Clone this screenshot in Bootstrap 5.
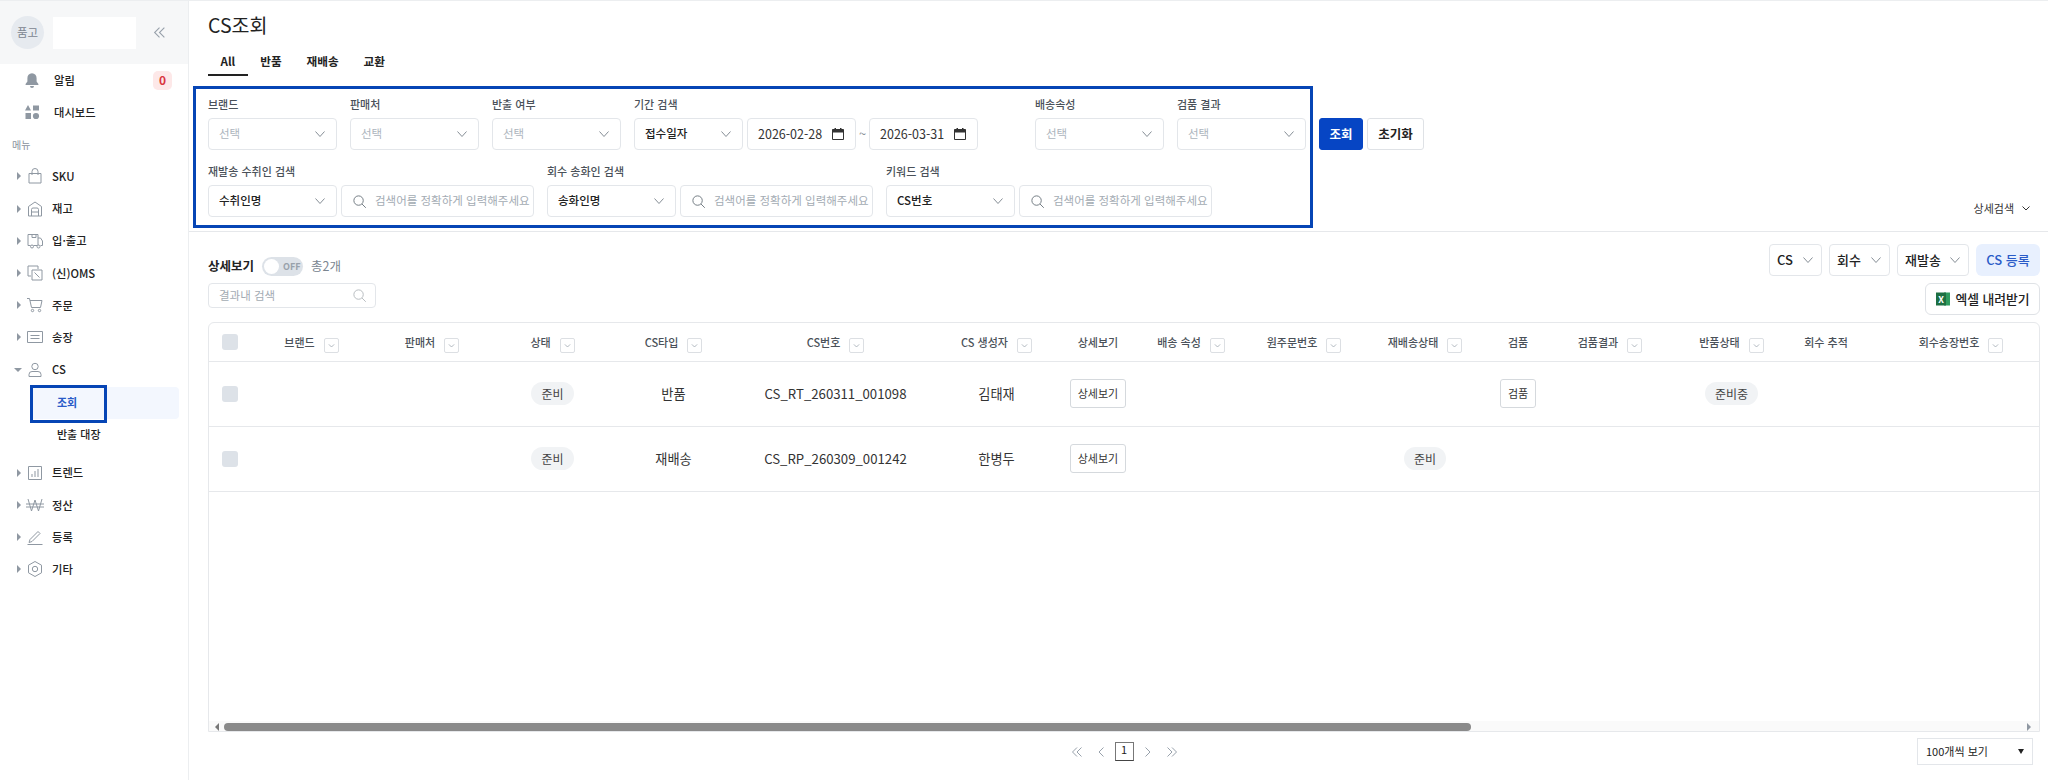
<!DOCTYPE html>
<html lang="ko">
<head>
  <meta charset="UTF-8">
  <title>CS조회</title>
  <link rel="stylesheet" href="https://cdn.jsdelivr.net/npm/bootstrap@5.3.0/dist/css/bootstrap.min.css">
  <style>
    body {
      font-family: "Noto Sans CJK KR", "Noto Sans", sans-serif;
      height: 100vh;
      overflow: hidden;
      color: #222;
      font-size: 13px;
      border-top: 1px solid #eceef0;
    }

    /* sidebar */
    .side {
      width: 189px;
      flex: none;
      border-right: 1px solid #eceef0;
    }
    .side-top {
      height: 63px;
      background: #f6f7f8;
      padding-left: 11px;
    }
    .side-avatar {
      width: 33px;
      height: 33px;
      background: #e6eaef;
      color: #7b8590;
      font-size: 11.5px;
    }
    .side-blank {
      width: 83px;
      height: 32px;
      margin-left: 9px;
      background: #fff;
    }
    .side-fold { margin-left: 17px; color: #98a1ab; }
    .side-item {
      height: 32.2px;
      font-weight: 500;
      color: #222;
      font-size: 11.3px;
      text-decoration: none;
    }
    .side-top-item { padding-left: 23px; }
    .side-top-item .nm { margin-left: 13px; }
    .side-badge {
      width: 19px;
      height: 19px;
      margin-left: auto;
      margin-right: 16px;
      background: #fde8e8;
      color: #d9363e;
      border-radius: 5px;
      font-size: 12px;
      font-weight: 700;
    }
    .side-cap {
      color: #8a939d;
      font-size: 10px;
      height: 32px;
      padding-left: 12px;
    }
    .side-tree { padding-left: 17px; }
    .side-tree .nm { margin-left: 8px; }
    .caret-r {
      width: 0; height: 0;
      border-left: 4px solid #8f98a2;
      border-top: 4px solid transparent;
      border-bottom: 4px solid transparent;
      margin-right: 5px;
    }
    .caret-d {
      width: 0; height: 0;
      border-top: 4px solid #8f98a2;
      border-left: 4px solid transparent;
      border-right: 4px solid transparent;
      margin-left: -3px;
      margin-right: 4px;
    }
    .caret-l {
      width: 0; height: 0;
      border-right: 4px solid #777;
      border-top: 4px solid transparent;
      border-bottom: 4px solid transparent;
    }
    .side-ico { width: 18px; height: 18px; flex: none; color: #8f98a2; }
    .side-sub-wrap { margin-top: 1px; }
    .side-sub {
      height: 32px;
      margin-left: 30px;
      margin-right: 9px;
      padding-left: 27px;
      border-radius: 4px;
      font-weight: 500;
      font-size: 11px;
      color: #222;
      text-decoration: none;
    }
    .side-sub.on { background: #f3f7fe; color: #2a5bc8; font-weight: 700; }
    .side-sub-gap { height: 6px; }
    .side-mark {
      position: absolute;
      left: 30px;
      top: -2px;
      width: 77px;
      height: 38px;
      border: 3px solid #0645b5;
    }

    /* top area */
    .page-main { min-width: 0; }
    .page-title {
      font-size: 19.5px;
      font-weight: 400;
      margin: 9px 0 0 19px;
      line-height: 29px;
    }
    .tab-row { margin: 9px 0 0 19px; }
    .tab-row .nav-link {
      color: #222;
      font-weight: 700;
      font-size: 11.6px;
      padding: 0 12.5px;
      height: 28px;
      line-height: 26px;
      border-bottom: 2px solid transparent;
    }
    .tab-row .nav-link.active { border-bottom-color: #222; }
    .filter-zone {
      border-bottom: 1px solid #e6e8eb;
      padding: 10px 8px 3px 4px;
    }
    .filter-panel {
      width: 1120px;
      height: 142px;
      border: 3px solid #0645b5;
      padding: 6px 0 0 12px;
    }
    .flt-row { display: flex; gap: 13px; }
    .flt-row + .flt-row { margin-top: 12px; }
    .flt-label {
      font-size: 11px;
      line-height: 18px;
      margin-bottom: 5px;
      color: #4a5159;
      font-weight: 500;
      white-space: nowrap;
    }
    .flt-sel, .top-sel {
      height: 32px;
      font-size: 11.5px;
      font-weight: 500;
      color: #222;
      border: 1px solid #e3e6ea;
      border-radius: 4px;
      padding: 0 24px 0 10px;
      background-position: right 10px center;
      background-size: 12px 10px;
      background-image: url("data:image/svg+xml,%3csvg xmlns='http://www.w3.org/2000/svg' viewBox='0 0 12 8'%3e%3cpath fill='none' stroke='%23868e96' d='M1.5 1.5 6 6.5l4.5-5'/%3e%3c/svg%3e");
    }
    .flt-sel { width: 129px; }
    .flt-sel.empty { color: #adb5bd; font-weight: 400; }
    .flt-date { width: 109px; }
    .flt-tilde { width: 13px; text-align: center; color: #868e96; }
    .flt-far { margin-left: 44px; }
    .flt-box {
      height: 32px;
      border: 1px solid #e3e6ea;
      border-radius: 4px;
      padding: 0 10px;
      font-size: 12.5px;
      color: #333;
      background: #fff;
    }
    .flt-search { width: 193px; padding-right: 1px; }
    .flt-box input {
      border: 0;
      outline: 0;
      width: 100%;
      min-width: 0;
      padding: 0;
      font-size: 11.5px;
      color: #333;
      background: transparent;
    }
    .flt-box input::placeholder { color: #a3abb3; }
    .filter-btns { margin: 32px 0 0 6px; }
    .btn-find, .btn-reset {
      height: 32px;
      font-size: 12.5px;
      font-weight: 700;
      padding: 0;
      border-radius: 3px;
    }
    .btn-find { width: 44px; background: #0645c4; border-color: #0645c4; color: #fff; }
    .btn-reset { width: 57px; background: #fff; border-color: #dfe2e6; color: #222; }
    .more-toggle { margin: 0 8px 12px 0; gap: 6px; font-size: 11px; color: #333; white-space: nowrap; }

    /* tool row */
    .tool-row { padding: 12px 8px 7px 19px; }
    .tool-detail { font-size: 12.5px; font-weight: 700; height: 19px; margin-top: 13px; }
    .tool-total { color: #7b8590; font-size: 12.5px; font-weight: 400; }
    .sw-off {
      width: 41px;
      height: 19px;
      background: #dde2e8;
      border-radius: 10px;
      padding: 2px;
      font-size: 9px;
      font-weight: 700;
      color: #98a1ab;
    }
    .sw-knob { width: 15px; height: 15px; background: #fff; border-radius: 50%; margin-right: 4px; }
    .mini-search {
      width: 168px;
      height: 25px;
      margin-top: 7px;
      padding: 0 8px 0 10px;
    }
    .top-acts { gap: 7px; }
    .top-sel { font-size: 13px; padding-left: 7px; padding-right: 20px; background-position: right 7px center; }
    .sel-cs { width: 53px; }
    .sel-back { width: 61px; }
    .sel-re { width: 72px; }
    .btn-add {
      width: 64px;
      height: 32px;
      padding: 0;
      background: #e8f0fe;
      border: 0;
      color: #2a5bc8;
      font-size: 13px;
      font-weight: 500;
    }
    .btn-xls {
      width: 115px;
      height: 32px;
      padding: 0;
      margin-top: 7px;
      background: #fff;
      border: 1px solid #dfe2e6;
      font-size: 12.8px;
      font-weight: 500;
      color: #222;
    }

    /* table */
    .grid-wrap {
      margin: 0 8px 0 19px;
      border: 1px solid #e6e8eb;
      border-radius: 6px 6px 0 0;
      overflow: hidden;
      min-height: 0;
    }
    .grid-view { overflow: hidden; min-height: 0; }
    .grid-table { width: 2650px; table-layout: fixed; margin: 0; }
    .grid-table col:nth-child(1) { width: 43px; }
    .grid-table col:nth-child(2) { width: 119px; }
    .grid-table col:nth-child(3) { width: 122px; }
    .grid-table col:nth-child(4) { width: 119px; }
    .grid-table col:nth-child(5) { width: 123px; }
    .grid-table col:nth-child(6) { width: 201px; }
    .grid-table col:nth-child(7) { width: 121px; }
    .grid-table col:nth-child(8) { width: 82px; }
    .grid-table col:nth-child(9) { width: 104px; }
    .grid-table col:nth-child(10) { width: 122px; }
    .grid-table col:nth-child(11) { width: 120px; }
    .grid-table col:nth-child(12) { width: 66px; }
    .grid-table col:nth-child(13) { width: 118px; }
    .grid-table col:nth-child(14) { width: 125px; }
    .grid-table col:nth-child(15) { width: 64px; }
    .grid-table col:nth-child(16) { width: 206px; }
    .grid-table th, .grid-table td {
      border-bottom: 1px solid #e6e8eb;
      text-align: center;
      vertical-align: middle;
      padding: 0;
      white-space: nowrap;
    }
    .grid-table th {
      height: 38px;
      font-size: 11px;
      font-weight: 500;
      color: #4a5159;
    }
    .grid-table td { height: 65px; font-size: 13.2px; color: #333; }
    .grid-table .chk-cell { text-align: left; padding-left: 13px; }
    .chk-fake { display: block; width: 16px; height: 16px; background: #dde2e8; border-radius: 3px; }
    .f-box {
      display: inline-flex;
      align-items: center;
      justify-content: center;
      width: 15px;
      height: 15px;
      margin: -4px 0 -4px 9px;
      border: 1px solid #dcdfe3;
      border-radius: 2px;
      vertical-align: -3px;
      color: #98a1ab;
    }
    .st-pill {
      display: inline-block;
      padding: 0 10px;
      height: 23px;
      line-height: 23px;
      background: #f1f3f5;
      border-radius: 12px;
      font-size: 12px;
      color: #444;
    }
    .st-btn {
      height: 29px;
      padding: 0 7px;
      font-size: 11px;
      font-weight: 400;
      color: #333;
      background: #fff;
      border: 1px solid #d5d9dd;
      border-radius: 3px;
    }
    .hbar { height: 10px; background: #fafafa; padding-top: 1px; }
    .hbar-track { width: 1800px; height: 8px; }
    .hbar-thumb { height: 8px; background: #8a8a8a; border-radius: 4px; }
    .hbar-end { width: 15px; }

    /* footer */
    .foot-row {
      display: grid;
      grid-template-columns: 1fr auto 1fr;
      margin: 6px 8px 15px 19px;
      height: 27px;
    }
    .pg-arrow { color: #98a1ab; width: 12px; height: 12px; }
    .pg-now {
      width: 19px;
      height: 19px;
      border: 1px solid #777;
      border-bottom-color: #444;
      font-size: 11px;
      line-height: 13px;
      text-align: center;
    }
    .page-size {
      width: 116px;
      height: 27px;
      margin-right: 7px;
      justify-self: end;
      font-size: 11px;
      border: 1px solid #e3e6ea;
      padding: 0 8px;
    }
    .page-size i { border-top: 5px solid #222; border-left: 3.5px solid transparent; border-right: 3.5px solid transparent; }
  </style>
</head>

<body class="d-flex">
  <svg width="0" height="0" class="position-absolute">
    <symbol id="i-chev" viewBox="0 0 12 12"><path d="M2.5 4.5 6 8l3.5-3.5" fill="none" stroke="currentColor"/></symbol>
    <symbol id="i-find" viewBox="0 0 16 16"><circle cx="7" cy="7" r="5" fill="none" stroke="currentColor"/><path d="m10.7 10.7 4 4" fill="none" stroke="currentColor"/></symbol>
    <symbol id="i-cal" viewBox="0 0 14 14"><path d="M1.5 2.5h11v10h-11z" fill="none" stroke="currentColor"/><path d="M1.5 2.5h11v3h-11zM3.5 1h1.5v2H3.5zM9 1h1.5v2H9z" fill="currentColor"/></symbol>
    <symbol id="i-left2" viewBox="0 0 12 12"><path d="M6 1.5 1.5 6 6 10.5M10.5 1.5 6 6l4.5 4.5" fill="none" stroke="currentColor"/></symbol>
    <symbol id="i-right2" viewBox="0 0 12 12"><path d="M6 1.5 10.5 6 6 10.5M1.5 1.5 6 6l-4.5 4.5" fill="none" stroke="currentColor"/></symbol>
    <symbol id="i-left" viewBox="0 0 12 12"><path d="M8.5 1.5 4 6l4.5 4.5" fill="none" stroke="currentColor"/></symbol>
    <symbol id="i-right" viewBox="0 0 12 12"><path d="M3.5 1.5 8 6l-4.5 4.5" fill="none" stroke="currentColor"/></symbol>
  </svg>

  <aside class="side">
    <div class="side-top d-flex align-items-center">
      <div class="side-avatar rounded-circle d-flex align-items-center justify-content-center">품고</div>
      <div class="side-blank"></div>
      <svg class="side-fold" width="13" height="13"><use href="#i-left2"/></svg>
    </div>
    <a class="side-item side-top-item d-flex align-items-center" href="#">
      <svg class="side-ico" viewBox="0 0 18 18"><path fill="currentColor" d="M9 2.2c-3 0-4.600 2.200-4.600 5v3.300L2.600 13v1h12.800v-1l-1.800-2.500V7.200c0-2.800-1.600-5-4.600-5zM7 15h4a2 2 0 0 1-4 0z"/></svg>
      <span class="nm">알림</span>
      <span class="side-badge d-flex align-items-center justify-content-center">0</span>
    </a>
    <a class="side-item side-top-item d-flex align-items-center" href="#">
      <svg class="side-ico" viewBox="0 0 18 18"><path fill="currentColor" d="M5 2 8 7.500H2zM10 2.500h6v5h-6zM2.500 10h5.500v6H2.500z"/><circle cx="13" cy="13" r="3.100" fill="currentColor"/></svg>
      <span class="nm">대시보드</span>
    </a>
    <div class="side-cap d-flex align-items-center">메뉴</div>
    <a class="side-item side-tree d-flex align-items-center" href="#">
      <span class="caret-r"></span>
      <svg class="side-ico" viewBox="0 0 18 18"><g fill="none" stroke="currentColor"><path d="M3 6.500h12v9.500H3z"/><path d="M6 8V4.500a3 3 0 0 1 6 0V8"/></g></svg>
      <span class="nm">SKU</span>
    </a>
    <a class="side-item side-tree d-flex align-items-center" href="#">
      <span class="caret-r"></span>
      <svg class="side-ico" viewBox="0 0 18 18"><g fill="none" stroke="currentColor"><path d="M2.500 16V6.500L9 2l6.500 4.500V16z"/><path d="M5.500 16V9.500a1.500 1.500 0 0 1 1.500-1.500h4a1.500 1.500 0 0 1 1.500 1.500V16M5.500 12h7"/></g></svg>
      <span class="nm">재고</span>
    </a>
    <a class="side-item side-tree d-flex align-items-center" href="#">
      <span class="caret-r"></span>
      <svg class="side-ico" viewBox="0 0 18 18"><g fill="none" stroke="currentColor"><path d="M2 13.500V2.500h10v11M12 6h2.500l2 3v4.500h-2M2 13.500h2.500M7.500 13.500H11"/><circle cx="6" cy="14.500" r="1.500"/><circle cx="12.500" cy="14.500" r="1.500"/><path d="M6 2.500v3h4v-3"/></g></svg>
      <span class="nm">입·출고</span>
    </a>
    <a class="side-item side-tree d-flex align-items-center" href="#">
      <span class="caret-r"></span>
      <svg class="side-ico" viewBox="0 0 18 18"><g fill="none" stroke="currentColor"><path d="M5 12H2V2h10v3"/><path d="M6 6h10v10H6z"/><path d="m8.500 8.500 5 5"/></g></svg>
      <span class="nm">(신)OMS</span>
    </a>
    <a class="side-item side-tree d-flex align-items-center" href="#">
      <span class="caret-r"></span>
      <svg class="side-ico" viewBox="0 0 18 18"><g fill="none" stroke="currentColor"><path d="M1 2.500h2.500l2 9h9l1.500-7H4"/><circle cx="6.500" cy="14.500" r="1.200"/><circle cx="13.500" cy="14.500" r="1.200"/></g></svg>
      <span class="nm">주문</span>
    </a>
    <a class="side-item side-tree d-flex align-items-center" href="#">
      <span class="caret-r"></span>
      <svg class="side-ico" viewBox="0 0 18 18"><g fill="none" stroke="currentColor"><path d="M1.500 3.500h15v11h-15z"/><path d="M4.500 7.500h9M4.500 10.500h9"/></g></svg>
      <span class="nm">송장</span>
    </a>
    <a class="side-item side-tree d-flex align-items-center" href="#">
      <span class="caret-d"></span>
      <svg class="side-ico" viewBox="0 0 18 18"><g fill="none" stroke="currentColor"><circle cx="9" cy="5.500" r="3.200"/><path d="M3 15.500v-2a3 3 0 0 1 3-3h6a3 3 0 0 1 3 3v2z"/></g></svg>
      <span class="nm">CS</span>
    </a>
    <div class="side-sub-wrap position-relative">
      <a class="side-sub on d-flex align-items-center" href="#">조회</a>
      <span class="side-mark"></span>
    </div>
    <a class="side-sub d-flex align-items-center" href="#">반출 대장</a>
    <div class="side-sub-gap"></div>
    <a class="side-item side-tree d-flex align-items-center" href="#">
      <span class="caret-r"></span>
      <svg class="side-ico" viewBox="0 0 18 18"><g fill="none" stroke="currentColor"><path d="M2.500 2.500h13v13h-13z"/><path d="M6 13v-3M9 13V7M12 13V5"/></g></svg>
      <span class="nm">트렌드</span>
    </a>
    <a class="side-item side-tree d-flex align-items-center" href="#">
      <span class="caret-r"></span>
      <svg class="side-ico" viewBox="0 0 18 18"><g fill="none" stroke="currentColor"><path d="m2 3 3.500 12L9 4l3.500 11L16 3M0 8h18M0 11h18"/></g></svg>
      <span class="nm">정산</span>
    </a>
    <a class="side-item side-tree d-flex align-items-center" href="#">
      <span class="caret-r"></span>
      <svg class="side-ico" viewBox="0 0 18 18"><g fill="none" stroke="currentColor"><path d="m4 11.500 8-8 2 2-8 8-3 1zM1.500 16.500h15"/></g></svg>
      <span class="nm">등록</span>
    </a>
    <a class="side-item side-tree d-flex align-items-center" href="#">
      <span class="caret-r"></span>
      <svg class="side-ico" viewBox="0 0 18 18"><g fill="none" stroke="currentColor"><path d="M9 1.500 15.500 5.200v7.600L9 16.500l-6.500-3.700V5.200z"/><circle cx="9" cy="9" r="2.700"/></g></svg>
      <span class="nm">기타</span>
    </a>
  </aside>

  <main class="page-main flex-grow-1 d-flex flex-column">
    <h1 class="page-title">CS조회</h1>
    <nav class="nav tab-row">
      <a class="nav-link active" href="#">All</a>
      <a class="nav-link" href="#">반품</a>
      <a class="nav-link" href="#">재배송</a>
      <a class="nav-link" href="#">교환</a>
    </nav>

    <section class="filter-zone d-flex">
      <div class="filter-panel flex-shrink-0">
        <div class="flt-row">
          <div>
            <div class="flt-label">브랜드</div>
            <select class="form-select flt-sel empty"><option>선택</option></select>
          </div>
          <div>
            <div class="flt-label">판매처</div>
            <select class="form-select flt-sel empty"><option>선택</option></select>
          </div>
          <div>
            <div class="flt-label">반출 여부</div>
            <select class="form-select flt-sel empty"><option>선택</option></select>
          </div>
          <div>
            <div class="flt-label">기간 검색</div>
            <div class="d-flex align-items-center">
              <select class="form-select flt-sel flt-date me-1"><option>접수일자</option></select>
              <div class="flt-box flt-date d-flex align-items-center justify-content-between">
                2026-02-28
                <svg class="flex-shrink-0" width="14" height="14"><use href="#i-cal"/></svg>
              </div>
              <span class="flt-tilde">~</span>
              <div class="flt-box flt-date d-flex align-items-center justify-content-between">
                2026-03-31
                <svg class="flex-shrink-0" width="14" height="14"><use href="#i-cal"/></svg>
              </div>
            </div>
          </div>
          <div class="flt-far">
            <div class="flt-label">배송속성</div>
            <select class="form-select flt-sel empty"><option>선택</option></select>
          </div>
          <div>
            <div class="flt-label">검품 결과</div>
            <select class="form-select flt-sel empty"><option>선택</option></select>
          </div>
        </div>
        <div class="flt-row">
          <div>
            <div class="flt-label">재발송 수취인 검색</div>
            <div class="d-flex gap-1">
              <select class="form-select flt-sel"><option>수취인명</option></select>
              <div class="flt-box flt-search d-flex align-items-center gap-2">
                <svg class="flex-shrink-0 text-secondary" width="15" height="15"><use href="#i-find"/></svg>
                <input type="text" placeholder="검색어를 정확하게 입력해주세요">
              </div>
            </div>
          </div>
          <div>
            <div class="flt-label">회수 송화인 검색</div>
            <div class="d-flex gap-1">
              <select class="form-select flt-sel"><option>송화인명</option></select>
              <div class="flt-box flt-search d-flex align-items-center gap-2">
                <svg class="flex-shrink-0 text-secondary" width="15" height="15"><use href="#i-find"/></svg>
                <input type="text" placeholder="검색어를 정확하게 입력해주세요">
              </div>
            </div>
          </div>
          <div>
            <div class="flt-label">키워드 검색</div>
            <div class="d-flex gap-1">
              <select class="form-select flt-sel"><option>CS번호</option></select>
              <div class="flt-box flt-search d-flex align-items-center gap-2">
                <svg class="flex-shrink-0 text-secondary" width="15" height="15"><use href="#i-find"/></svg>
                <input type="text" placeholder="검색어를 정확하게 입력해주세요">
              </div>
            </div>
          </div>
        </div>
      </div>
      <div class="d-flex align-items-start gap-1 filter-btns">
        <button class="btn btn-find">조회</button>
        <button class="btn btn-reset">초기화</button>
      </div>
      <div class="more-toggle ms-auto align-self-end d-flex align-items-center">
        상세검색
        <svg width="12" height="12"><use href="#i-chev"/></svg>
      </div>
    </section>

    <section class="tool-row d-flex justify-content-between">
      <div>
        <div class="tool-detail d-flex align-items-center gap-2">
          상세보기
          <span class="sw-off d-flex align-items-center"><span class="sw-knob"></span>OFF</span>
          <span class="tool-total">총2개</span>
        </div>
        <div class="flt-box mini-search d-flex align-items-center">
          <input type="text" placeholder="결과내 검색">
          <svg class="flex-shrink-0 text-secondary opacity-50" width="15" height="15"><use href="#i-find"/></svg>
        </div>
      </div>
      <div class="d-flex flex-column align-items-end">
        <div class="d-flex top-acts">
          <select class="form-select top-sel sel-cs"><option>CS</option></select>
          <select class="form-select top-sel sel-back"><option>회수</option></select>
          <select class="form-select top-sel sel-re"><option>재발송</option></select>
          <button class="btn btn-add">CS 등록</button>
        </div>
        <button class="btn btn-xls d-flex align-items-center justify-content-center gap-1">
          <svg width="16" height="16" viewBox="0 0 16 16">
            <path fill="#2e9b5f" d="M9 1.500h6v13H9z"/>
            <path fill="#1d6f42" d="M1 1.500h10v13H1z"/>
            <text x="6" y="11.500" text-anchor="middle" font-size="9" font-weight="700" fill="#fff">X</text>
          </svg>
          엑셀 내려받기
        </button>
      </div>
    </section>

    <div class="grid-wrap flex-grow-1 d-flex flex-column">
      <div class="grid-view flex-grow-1">
        <table class="table grid-table">
          <colgroup>
            <col><col><col><col><col><col><col><col><col><col><col><col><col><col><col><col><col>
          </colgroup>
          <thead>
            <tr>
              <th class="chk-cell"><span class="chk-fake"></span></th>
              <th>브랜드<span class="f-box"><svg width="9" height="9"><use href="#i-chev"/></svg></span></th>
              <th>판매처<span class="f-box"><svg width="9" height="9"><use href="#i-chev"/></svg></span></th>
              <th>상태<span class="f-box"><svg width="9" height="9"><use href="#i-chev"/></svg></span></th>
              <th>CS타입<span class="f-box"><svg width="9" height="9"><use href="#i-chev"/></svg></span></th>
              <th>CS번호<span class="f-box"><svg width="9" height="9"><use href="#i-chev"/></svg></span></th>
              <th>CS 생성자<span class="f-box"><svg width="9" height="9"><use href="#i-chev"/></svg></span></th>
              <th>상세보기</th>
              <th>배송 속성<span class="f-box"><svg width="9" height="9"><use href="#i-chev"/></svg></span></th>
              <th>원주문번호<span class="f-box"><svg width="9" height="9"><use href="#i-chev"/></svg></span></th>
              <th>재배송상태<span class="f-box"><svg width="9" height="9"><use href="#i-chev"/></svg></span></th>
              <th>검품</th>
              <th>검품결과<span class="f-box"><svg width="9" height="9"><use href="#i-chev"/></svg></span></th>
              <th>반품상태<span class="f-box"><svg width="9" height="9"><use href="#i-chev"/></svg></span></th>
              <th>회수 추적</th>
              <th>회수송장번호<span class="f-box"><svg width="9" height="9"><use href="#i-chev"/></svg></span></th>
              <th></th>
            </tr>
          </thead>
          <tbody>
            <tr>
              <td class="chk-cell"><span class="chk-fake"></span></td>
              <td></td>
              <td></td>
              <td><span class="st-pill">준비</span></td>
              <td>반품</td>
              <td>CS_RT_260311_001098</td>
              <td>김태재</td>
              <td><button class="st-btn">상세보기</button></td>
              <td></td>
              <td></td>
              <td></td>
              <td><button class="st-btn">검품</button></td>
              <td></td>
              <td><span class="st-pill">준비중</span></td>
              <td></td>
              <td></td>
              <td></td>
            </tr>
            <tr>
              <td class="chk-cell"><span class="chk-fake"></span></td>
              <td></td>
              <td></td>
              <td><span class="st-pill">준비</span></td>
              <td>재배송</td>
              <td>CS_RP_260309_001242</td>
              <td>한병두</td>
              <td><button class="st-btn">상세보기</button></td>
              <td></td>
              <td></td>
              <td><span class="st-pill">준비</span></td>
              <td></td>
              <td></td>
              <td></td>
              <td></td>
              <td></td>
              <td></td>
            </tr>
          </tbody>
        </table>
      </div>
      <div class="hbar d-flex align-items-center">
        <div class="hbar-end d-flex justify-content-center"><span class="caret-l"></span></div>
        <div class="hbar-track"><div class="hbar-thumb" style="width:69.3%"></div></div>
        <div class="hbar-end d-flex justify-content-center"><span class="caret-r"></span></div>
      </div>
    </div>

    <footer class="foot-row">
      <div></div>
      <div class="d-flex align-items-start gap-2 pt-1">
        <svg class="pg-arrow mt-1" viewBox="0 0 12 12"><use href="#i-left2"/></svg>
        <svg class="pg-arrow mt-1 ms-1" viewBox="0 0 12 12"><use href="#i-left"/></svg>
        <div class="pg-now">1</div>
        <svg class="pg-arrow mt-1" viewBox="0 0 12 12"><use href="#i-right"/></svg>
        <svg class="pg-arrow mt-1 ms-1" viewBox="0 0 12 12"><use href="#i-right2"/></svg>
      </div>
      <div class="page-size d-flex align-items-center justify-content-between">
        100개씩 보기
        <i></i>
      </div>
    </footer>
  </main>
</body>
</html>
